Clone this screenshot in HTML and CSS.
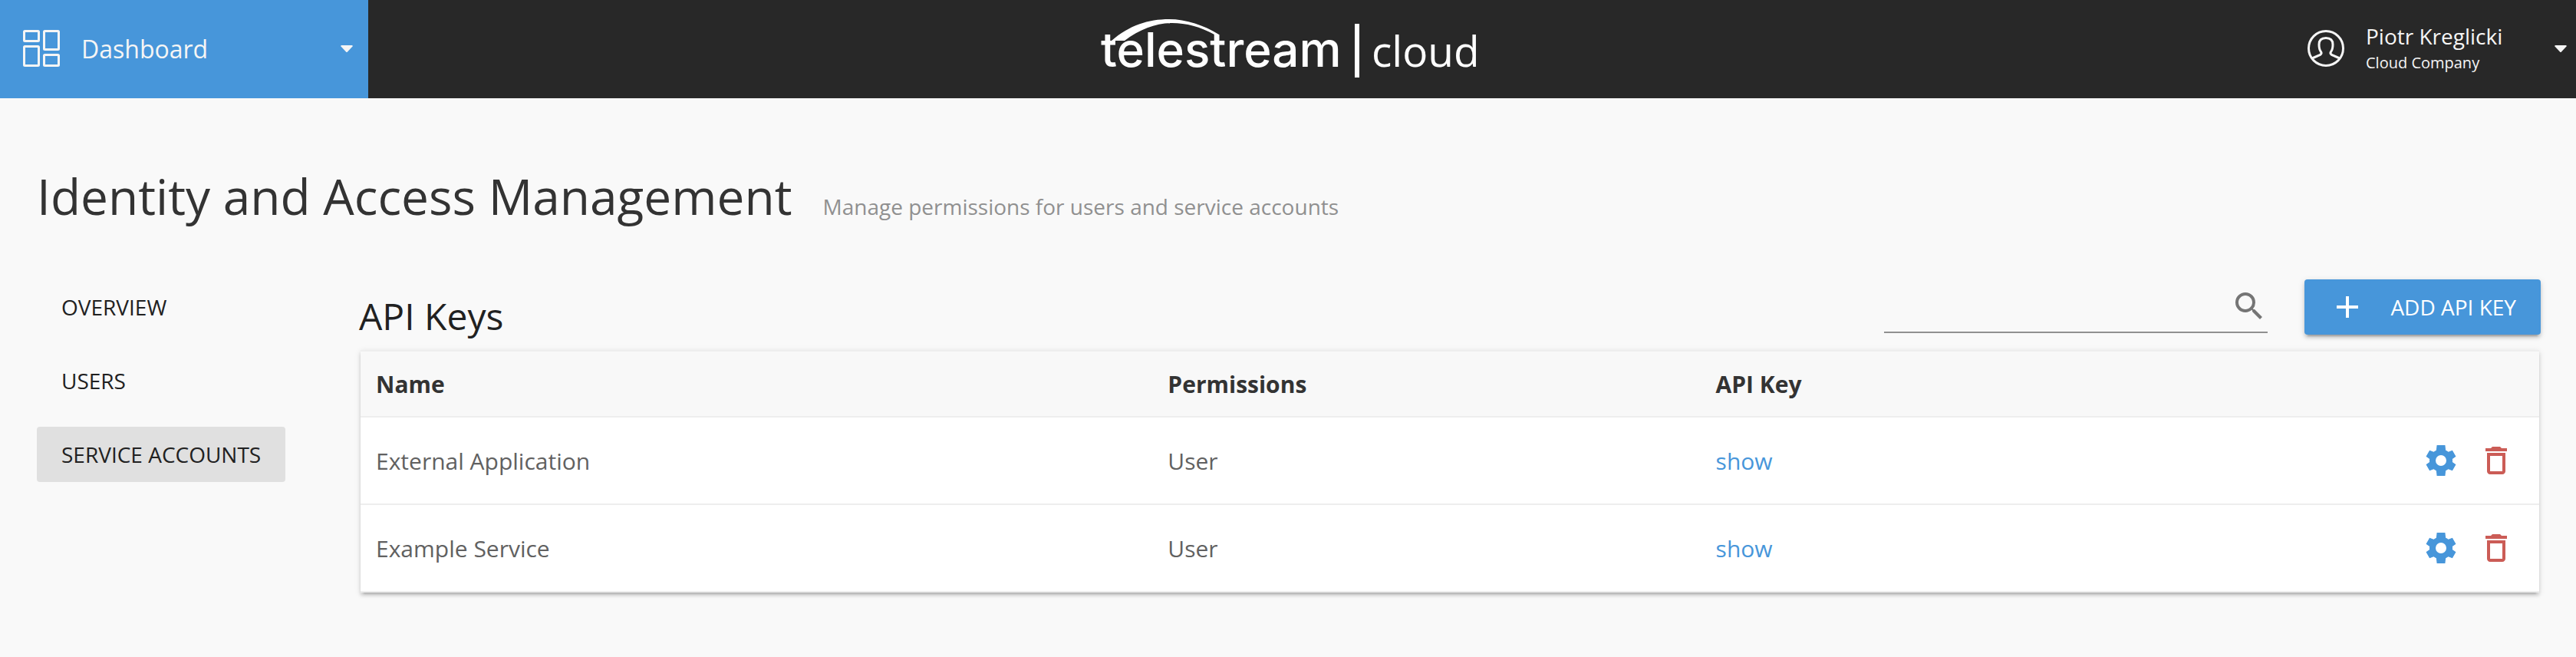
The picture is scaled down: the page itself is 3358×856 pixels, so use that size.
FILE: index.html
```html
<!DOCTYPE html>
<html lang="en">
<head>
    <meta charset="UTF-8">
    <meta name="viewport" content="width=device-width, initial-scale=1.0">
    <title>Identity and Access Management</title>
    <link rel="stylesheet" href="styles.css">
</head>
<body>
    <svg class="sprite" aria-hidden="true">
        <symbol id="icon-settings" viewBox="0 0 24 24">
            <path d="M19.43 12.98c.04-.32.07-.64.07-.98s-.03-.66-.07-.98l2.3-1.65-2.3-3.98-2.65 1c-.52-.4-1.08-.73-1.69-.98L14.7 2H9.3l-.39 3.41c-.61.25-1.17.59-1.69.98l-2.65-1-2.3 3.98 2.3 1.65c-.04.32-.07.65-.07.98s.03.66.07.98l-2.3 1.65 2.3 3.98 2.65-1c.52.4 1.08.73 1.69.98L9.3 22h5.4l.39-3.41c.61-.25 1.17-.59 1.69-.98l2.65 1 2.3-3.98-2.3-1.65zM12 15.5a3.5 3.5 0 1 1 0-7 3.5 3.5 0 0 1 0 7z"/>
        </symbol>
        <symbol id="icon-delete" viewBox="0 0 24 24">
            <path d="M6 19c0 1.1.9 2 2 2h8c1.1 0 2-.9 2-2V7H6v12zM8 9h8v10H8V9zm7.5-5l-1-1h-5l-1 1H5v2h14V4z"/>
        </symbol>
    </svg>

    <header class="topbar">
        <button class="app-menu" type="button">
            <svg class="icon outline" viewBox="0 0 48 48" aria-hidden="true">
                <rect x="1.5" y="1.5" width="19" height="13" rx="1"/>
                <rect x="27.5" y="1.5" width="19" height="24" rx="1"/>
                <rect x="1.5" y="21.5" width="19" height="25" rx="1"/>
                <rect x="27.5" y="32.5" width="19" height="14" rx="1"/>
            </svg>
            <span class="app-name">Dashboard</span>
            <svg class="caret" viewBox="0 0 16 9" aria-hidden="true"><path d="M1 0h14l1 1-7 7.5q-1 1-2 0L0 1z"/></svg>
        </button>

        <a class="logo" href="#" aria-label="telestream cloud">
            <svg viewBox="-15 0 520 88" aria-hidden="true">
                <path d="M15 33C38 13 63 5 90 5c22 0 46 8 65 20h-6C131 15 112 10 94 10 73 10 52 18 32 33z"/>
                <path d="M332 11h6v70h-6z"/>
                <text class="logo-main" x="1" y="67">telestream</text>
                <text class="logo-sub" x="354" y="67">cloud</text>
            </svg>
        </a>

        <button class="user-menu" type="button">
            <svg class="icon outline" viewBox="0 0 48 48" aria-hidden="true">
                <circle cx="24" cy="24" r="22.5"/>
                <path d="M6 37L16.500 32.500Q19 31 17.500 28.500C15.500 26 15 23 15 19C15 13 18.500 10.500 24 10.500S33 13 33 19C33 23 32.500 26 30.500 28.500Q29 31 31.500 32.500L42 37"/>
            </svg>
            <span class="user-text">
                <span class="user-name">Piotr Kreglicki</span>
                <span class="user-company">Cloud Company</span>
            </span>
            <svg class="caret" viewBox="0 0 16 9" aria-hidden="true"><path d="M1 0h14l1 1-7 7.5q-1 1-2 0L0 1z"/></svg>
        </button>
    </header>

    <main class="page">
        <div class="page-header">
            <h1>Identity and Access Management</h1>
            <p>Manage permissions for users and service accounts</p>
        </div>

        <div class="page-body">
            <nav class="side-nav">
                <a href="#">OVERVIEW</a>
                <a href="#">USERS</a>
                <a href="#" class="active">SERVICE ACCOUNTS</a>
            </nav>

            <section class="content">
                <div class="toolbar">
                    <h2>API Keys</h2>
                    <div class="search">
                        <input type="text" aria-label="Search API keys">
                        <svg class="icon" viewBox="0 0 24 24" aria-hidden="true">
                            <path d="M15.5 14h-.79l-.28-.27A6.471 6.471 0 0 0 16 9.500 6.500 6.500 0 1 0 9.500 16c1.610 0 3.090-.59 4.230-1.570l.27.28v.79l5 4.990L20.490 19l-4.990-5zm-6 0C7.010 14 5 11.990 5 9.500S7.010 5 9.500 5 14 7.010 14 9.500 11.990 14 9.500 14z"/>
                        </svg>
                    </div>
                    <button class="add-button" type="button">
                        <svg class="icon" viewBox="0 0 24 24" aria-hidden="true"><path d="M19 13h-6v6h-2v-6H5v-2h6V5h2v6h6v2z"/></svg>
                        <span>ADD API KEY</span>
                    </button>
                </div>

                <table class="keys-table">
                    <thead>
                        <tr>
                            <th class="col-name">Name</th>
                            <th class="col-permissions">Permissions</th>
                            <th>API Key</th>
                            <th class="col-actions"></th>
                        </tr>
                    </thead>
                    <tbody>
                        <tr>
                            <td>External Application</td>
                            <td>User</td>
                            <td><a href="#">show</a></td>
                            <td>
                                <div class="actions">
                                    <button class="settings" type="button" aria-label="Settings"><svg class="icon"><use href="#icon-settings"/></svg></button>
                                    <button class="delete" type="button" aria-label="Delete"><svg class="icon"><use href="#icon-delete"/></svg></button>
                                </div>
                            </td>
                        </tr>
                        <tr>
                            <td>Example Service</td>
                            <td>User</td>
                            <td><a href="#">show</a></td>
                            <td>
                                <div class="actions">
                                    <button class="settings" type="button" aria-label="Settings"><svg class="icon"><use href="#icon-settings"/></svg></button>
                                    <button class="delete" type="button" aria-label="Delete"><svg class="icon"><use href="#icon-delete"/></svg></button>
                                </div>
                            </td>
                        </tr>
                    </tbody>
                </table>
            </section>
        </div>
    </main>
</body>
</html>
```
FILE: styles.css
```css
* {
    box-sizing: border-box;
}
body {
    margin: 0;
    background-color: #f9f9f9;
    color: #212121;
    font-family: "Open Sans", "Noto Sans", sans-serif;
    font-size: 28px;
}
h1, h2, p {
    margin: 0;
    font-weight: 400;
}
a {
    color: #4796da;
    text-decoration: none;
}
button, input {
    border: 0;
    padding: 0;
    background: none;
    color: inherit;
    font: inherit;
}
button {
    cursor: pointer;
}
.sprite {
    display: none;
}
.icon {
    display: block;
    flex: none;
    width: 48px;
    height: 48px;
    fill: currentColor;
}
.outline {
    fill: none;
    stroke: currentColor;
    stroke-width: 3px;
}
.caret {
    width: 16px;
    height: 9px;
    margin-left: auto;
    fill: currentColor;
}

/* Top bar */
.topbar {
    display: grid;
    grid-template-columns: 1fr auto 1fr;
    align-items: center;
    height: 128px;
    background-color: #282828;
    color: #f5f5f5;
}
.app-menu {
    display: flex;
    align-items: center;
    width: 480px;
    height: 128px;
    padding: 0 20px 2px 30px;
    background-color: #4796da;
}
.app-name {
    margin-left: 28px;
    font-size: 32px;
}
.logo {
    width: 520px;
    height: 88px;
}
.logo svg {
    display: block;
    width: 100%;
    height: 100%;
    fill: #fff;
}
.logo-main {
    font-family: Inter, sans-serif;
    font-size: 62px;
    font-weight: 500;
}
.logo-sub {
    font-size: 55px;
}
.user-menu {
    display: flex;
    justify-self: end;
    align-items: center;
    width: 350px;
    height: 128px;
    padding: 0 12px 2px 0;
    text-align: left;
}
.user-text {
    display: flex;
    flex-direction: column;
    margin-left: 28px;
}
.user-name {
    line-height: 38px;
}
.user-company {
    font-size: 20px;
    line-height: 32px;
}

/* Page */
.page {
    padding: 85px 46px 84px 48px;
}
.page-header {
    display: flex;
    align-items: baseline;
    gap: 40px;
    margin-bottom: 65px;
}
.page-header h1 {
    color: #333;
    font-size: 64px;
    line-height: 86px;
}
.page-header p {
    color: #909090;
}
.page-body {
    display: grid;
    grid-template-columns: 420px 1fr;
}
.side-nav {
    display: flex;
    flex-direction: column;
    align-items: flex-start;
    gap: 24px;
}
.side-nav a {
    padding: 0 32px;
    border-radius: 4px;
    color: #212121;
    line-height: 72px;
}
.side-nav .active {
    background-color: #e0e0e0;
}

.toolbar {
    display: flex;
    align-items: center;
    gap: 48px;
    margin-bottom: 20px;
}
.toolbar h2 {
    align-self: flex-end;
    margin-right: auto;
    font-size: 48px;
    line-height: 48px;
}
.search {
    display: flex;
    align-items: center;
    width: 500px;
    height: 68px;
    border-bottom: 2px solid #909090;
    color: #757575;
}
.search input {
    flex: 1;
    min-width: 0;
    height: 48px;
    outline: none;
}
.add-button {
    display: flex;
    align-items: center;
    gap: 32px;
    height: 72px;
    padding: 0 32px;
    border-radius: 4px;
    background-color: #4796da;
    color: #fff;
    box-shadow: 0 6px 2px -4px rgba(0, 0, 0, 0.2), 0 4px 4px rgba(0, 0, 0, 0.14), 0 2px 10px rgba(0, 0, 0, 0.12);
}

.keys-table {
    width: calc(100% - 4px);
    margin: 0 2px;
    border-collapse: separate;
    border-spacing: 0;
    table-layout: fixed;
    background-color: #fff;
    font-size: 30px;
    text-align: left;
    box-shadow: 0 6px 2px -4px rgba(0, 0, 0, 0.12), 0 4px 4px rgba(0, 0, 0, 0.12), 0 2px 8px rgba(0, 0, 0, 0.12);
}
.keys-table th,
.keys-table td {
    padding: 0 20px;
    border-bottom: 2px solid #eee;
}
.keys-table th {
    height: 88px;
    border-top: 2px solid #eee;
    background-color: #f8f8f8;
    color: #333;
    font-weight: 700;
}
.keys-table td {
    height: 114px;
    color: #616161;
}
.keys-table td:last-child {
    padding-right: 32px;
}
.col-name {
    width: 36.35%;
}
.col-permissions {
    width: 25.15%;
}
.col-actions {
    width: 10%;
}
.actions {
    display: flex;
    justify-content: flex-end;
    gap: 24px;
}
.settings {
    color: #4796da;
}
.delete {
    color: #cb5c56;
}
```
